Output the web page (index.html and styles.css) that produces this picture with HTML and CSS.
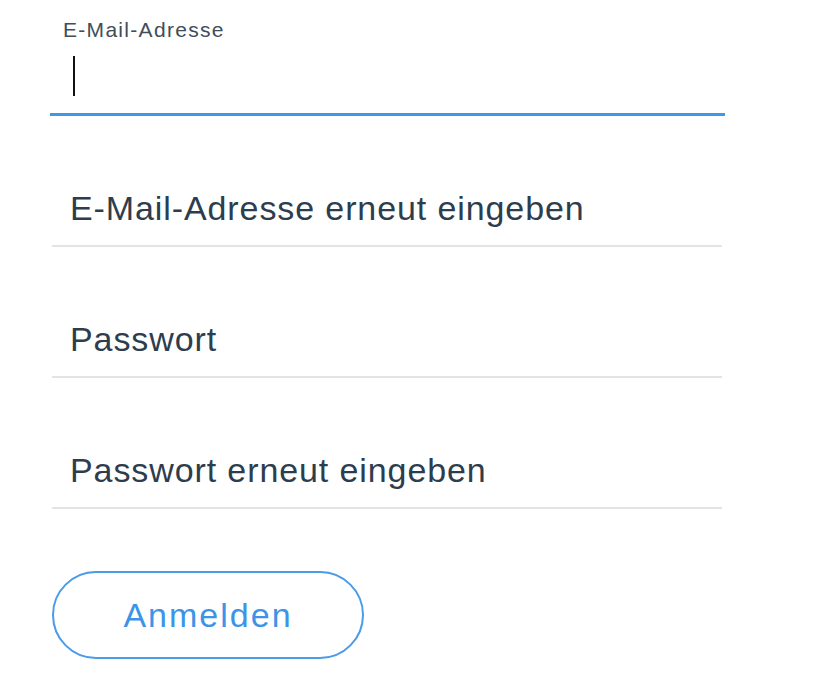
FILE: index.html
```html
<!DOCTYPE html>
<html lang="de">
<head>
  <meta charset="UTF-8">
  <meta name="viewport" content="width=device-width, initial-scale=1.0">
  <title>Registrieren</title>
  <link rel="stylesheet" href="styles.css">
</head>
<body>
  <form class="signup-form">
    <div class="field active">
      <label class="field-label" for="email">E-Mail-Adresse</label>
      <div class="field-input"><span class="caret"></span></div>
    </div>

    <div class="field">
      <span class="placeholder">E-Mail-Adresse erneut eingeben</span>
    </div>

    <div class="field">
      <span class="placeholder">Passwort</span>
    </div>

    <div class="field">
      <span class="placeholder">Passwort erneut eingeben</span>
    </div>

    <button type="button" class="submit-btn">Anmelden</button>
  </form>
</body>
</html>
```

FILE: styles.css
```css
* {
  box-sizing: border-box;
}
body {
  margin: 0;
  background-color: #fff;
  font-family: "Liberation Sans", Arial, sans-serif;
  color: #2e3d4d;
}
.signup-form {
  display: flex;
  flex-direction: column;
  width: 675px;
  margin-left: 50px;
}
.field {
  margin-left: 2px;
  width: 670px;
  padding: 72px 0 17px 18px;
  border-bottom: 2px solid #e3e3e3;
}
.field.active {
  margin-left: 0;
  width: 675px;
  padding: 18px 0 17px 13px;
  border-bottom: 3px solid #3f97e8;
}
.field-label {
  display: block;
  font-size: 21px;
  line-height: 24px;
  letter-spacing: 1.3px;
  color: #414d59;
}
.field-input {
  height: 40px;
  margin-top: 14px;
  padding-left: 10px;
}
.caret {
  display: block;
  width: 2px;
  height: 40px;
  background-color: #111;
}
.placeholder {
  display: block;
  font-size: 34px;
  line-height: 40px;
  letter-spacing: 0.9px;
}
.submit-btn {
  margin: 62px 0 0 2px;
  width: 312px;
  height: 88px;
  border: 2px solid #4a9be8;
  border-radius: 44px;
  background-color: #fff;
  color: #3d94e6;
  font-family: "Liberation Sans", Arial, sans-serif;
  font-size: 34px;
  letter-spacing: 2px;
  cursor: pointer;
}
```
